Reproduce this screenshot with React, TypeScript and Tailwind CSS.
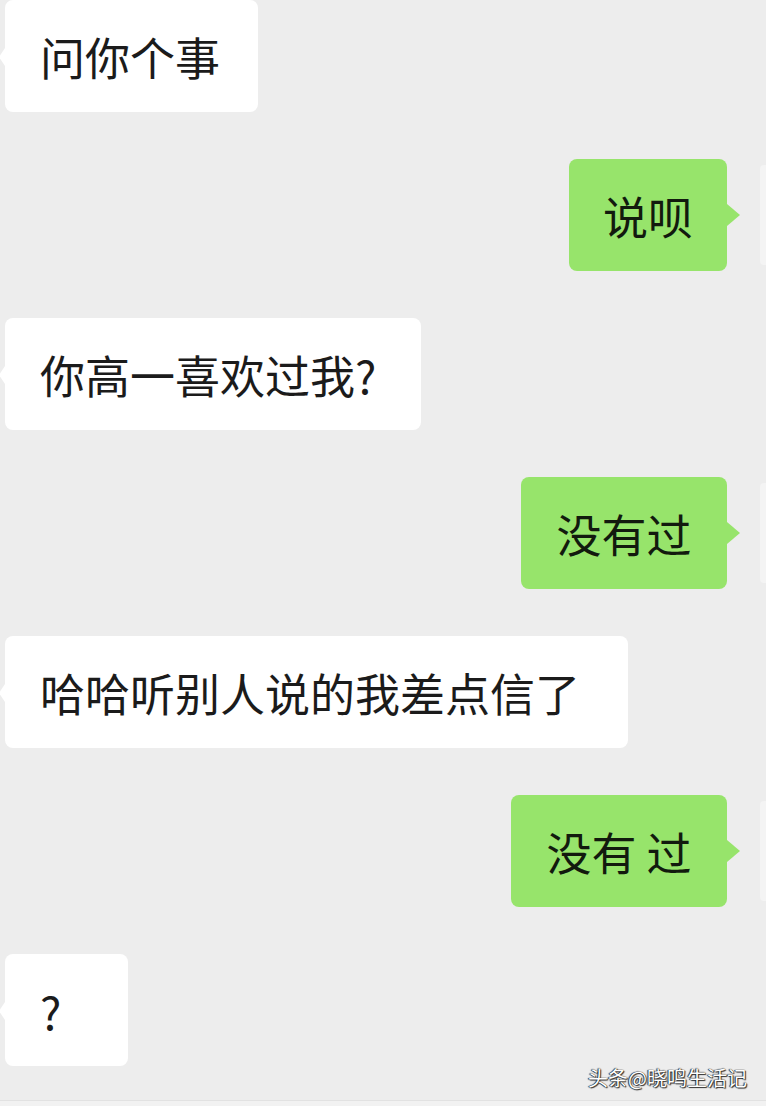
import React from 'react';

type Msg = { side: 'left' | 'right'; text: string; width: number };

const messages: Msg[] = [
  { side: 'left', text: '问你个事', width: 253 },
  { side: 'right', text: '说呗', width: 158 },
  { side: 'left', text: '你高一喜欢过我?', width: 416 },
  { side: 'right', text: '没有过', width: 206 },
  { side: 'left', text: '哈哈听别人说的我差点信了', width: 623 },
  { side: 'right', text: '没有 过', width: 216 },
  { side: 'left', text: '?', width: 123 },
];

const font = { fontFamily: '"Noto Sans CJK SC", "Noto Sans", sans-serif' };

function Bubble({ msg }: { msg: Msg }) {
  if (msg.side === 'left') {
    return (
      <div className="flex h-[112px] items-center">
        <div className="relative ml-[5px] flex h-full items-center rounded-[8px] bg-white pl-[35px]" style={{ width: msg.width }}>
          <span className="absolute left-[-6px] top-[48px] h-0 w-0 border-y-[9px] border-r-[6px] border-y-transparent border-r-white" />
          <span className="whitespace-pre text-[45px] leading-none text-[#1b1b1b]">{msg.text}</span>
        </div>
      </div>
    );
  }
  return (
    <div className="flex h-[112px] items-center justify-end">
      <div className="relative flex h-full items-center justify-center rounded-[8px] bg-[#97e46b]" style={{ width: msg.width }}>
        <span className="absolute right-[-13px] top-[45px] h-0 w-0 border-y-[11px] border-l-[13px] border-y-transparent border-l-[#97e46b]" />
        <span className="whitespace-pre text-[45px] leading-none text-[#121a0e]">{msg.text}</span>
      </div>
      <div className="ml-[33px] h-[100px] w-[6px] rounded-l-[4px] bg-[#f4f4f4]" />
    </div>
  );
}

export default function App() {
  return (
    <div className="relative h-[1106px] w-[766px] overflow-hidden bg-[#ededed]" style={font}>
      <div className="flex flex-col gap-[47px]">
        {messages.map((m, i) => (
          <Bubble key={i} msg={m} />
        ))}
      </div>
      <div className="absolute bottom-0 left-0 h-[6px] w-full border-t border-[#e2e2e2] bg-[#f2f2f2]" />
      <div
        className="absolute left-[588px] top-[1068px] text-[20px] leading-none text-white"
        style={{ textShadow: '0 0 1px #000, 1px 1px 1px #333, -1px 0 1px #333' }}
      >
        头条@晓鸣生活记
      </div>
    </div>
  );
}
